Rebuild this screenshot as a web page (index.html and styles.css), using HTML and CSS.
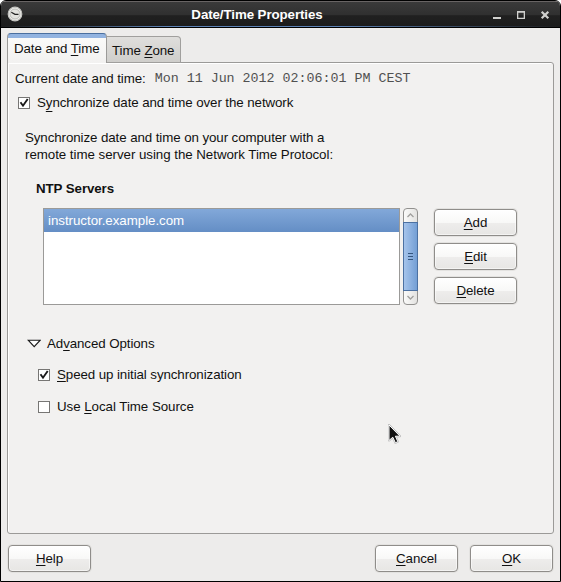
FILE: index.html
```html
<!DOCTYPE html>
<html lang="en">
<head>
<meta charset="utf-8">
<title>Date/Time Properties</title>
<link rel="stylesheet" href="styles.css">
</head>
<body>
<div class="window">
  <header class="titlebar">
    <svg class="clock" width="16" height="16" viewBox="0 0 16 16"><circle cx="8" cy="8" r="6.8" fill="#efefec" stroke="#c6c6c2" stroke-width="1.2"/><circle cx="8" cy="8" r="5" fill="#e2e2de" stroke="#a9a9a5" stroke-width=".7"/><path d="M4.3 6.2 8 8.3H11.5" fill="none" stroke="#222" stroke-width="1.2"/></svg>
    <h1 class="title">Date/Time Properties</h1>
    <svg class="controls" width="58" height="12" viewBox="0 0 58 12"><path d="M0 10h8" stroke="#d0d0ce" stroke-width="2"/><path d="M24 3h8v8h-8ZM25.3 4.8v4.9h5.4V4.8Z" fill="#d0d0ce" fill-rule="evenodd"/><path d="M48.7 3.7 55.3 10.3M55.3 3.7 48.7 10.3" stroke="#d0d0ce" stroke-width="2.2"/></svg>
  </header>
  <main class="content">
    <nav class="tabs">
      <div class="tab active"><span>Date and <u>T</u>ime</span></div>
      <div class="tab"><span>Time <u>Z</u>one</span></div>
    </nav>
    <section class="panel">
      <div class="current"><span>Current date and time:</span><span class="stamp">Mon 11 Jun 2012 02:06:01 PM CEST</span></div>
      <div class="check sync"><span class="box"><svg width="10" height="10" viewBox="0 0 10 10"><path d="M1.5 4.2 4 7.7 8.7 1" fill="none" stroke="#1a1a1a" stroke-width="1.9"/></svg></span><span>S<u class="low">y</u>nchronize date and time over the network</span></div>
      <p class="intro">Synchronize date and time on your computer with a<br><span class="wide">remote time server using the Network Time Protocol:</span></p>
      <h2 class="heading">NTP Servers</h2>
      <div class="servers">
        <div class="list"><div class="row">instructor.example.com</div></div>
        <div class="scroll">
          <svg class="arrow" width="13" height="13" viewBox="0 0 13 13"><path d="M3.5 8 6.5 5 9.5 8" fill="none" stroke="#a09f9d" stroke-width="1.3"/></svg>
          <div class="thumb"><i></i><i></i><i></i></div>
          <svg class="arrow" width="13" height="13" viewBox="0 0 13 13"><path d="M3.5 5 6.5 8 9.5 5" fill="none" stroke="#a09f9d" stroke-width="1.3"/></svg>
        </div>
        <div class="actions">
          <button class="btn"><span><u>A</u>dd</span></button>
          <button class="btn"><span><u>E</u>dit</span></button>
          <button class="btn"><span><u>D</u>elete</span></button>
        </div>
      </div>
      <div class="expander"><svg width="14" height="9" viewBox="0 0 14 9"><path d="M1.2 1.2h12L7.2 7.6Z" fill="#fff" stroke="#1a1a1a" stroke-width="1.1"/></svg><span>Ad<u>v</u>anced Options</span></div>
      <div class="check speed"><span class="box"><svg width="10" height="10" viewBox="0 0 10 10"><path d="M1.5 4.2 4 7.7 8.7 1" fill="none" stroke="#1a1a1a" stroke-width="1.9"/></svg></span><span><u>S</u>peed up initial synchronization</span></div>
      <div class="check local"><span class="box"></span><span class="wide">Use <u>L</u>ocal Time Source</span></div>
    </section>
    <footer class="footer">
      <button class="btn help"><span><u>H</u>elp</span></button>
      <button class="btn"><span><u>C</u>ancel</span></button>
      <button class="btn"><span><u>O</u>K</span></button>
    </footer>
  </main>
  <svg class="pointer" width="16" height="22" viewBox="0 0 16 22"><path d="M2 2V17.5L5.8 14.2 8.4 19.8 10.8 18.6 8.4 13.2H13Z" fill="#111" stroke="#b5b5b5" stroke-width="2" stroke-linejoin="round"/><path d="M2 2V17.5L5.8 14.2 8.4 19.8 10.8 18.6 8.4 13.2H13Z" fill="#111" stroke="#fff" stroke-linejoin="round"/></svg>
</div>
</body>
</html>
```
FILE: styles.css
```css
* { box-sizing: border-box; }
body {
  margin: 0;
  background: #fff;
  color: #111;
  font: 13.33px/17px "Liberation Sans", Arial, sans-serif;
  letter-spacing: -0.09px;
}
u {
  text-decoration-thickness: 1px;
  text-underline-offset: 2px;
  text-decoration-skip-ink: none;
}
.low { text-underline-offset: 4px; }
svg { display: block; flex: none; }
.window {
  position: relative;
  width: 561px;
  height: 582px;
  display: flex;
  flex-direction: column;
  border: 1px solid #000;
  border-radius: 6px 6px 0 0;
  background: #edeceb;
  overflow: hidden;
}
.titlebar {
  height: 27px;
  flex: none;
  display: flex;
  align-items: center;
  padding: 0 9px 1px 6px;
  border-top: 1px solid #686464;
  border-bottom: 1px solid #000;
  background: linear-gradient(90deg, transparent, #5d82b5 30%, #5d82b5 60%, transparent) bottom / 100% 1px no-repeat,
    linear-gradient(#3a3a3a, #303030 50%, #202020 55%, #1c1c1c);
}
.title {
  flex: 1;
  margin: 0 0 0 -2px;
  color: #fff;
  font-size: 13.33px;
  line-height: 17px;
  text-align: center;
}
.content {
  flex: 1;
  padding: 5px 6px 9px;
  display: flex;
  flex-direction: column;
}
.tabs {
  display: flex;
  align-items: flex-end;
  height: 30px;
  margin-bottom: -1px;
  z-index: 1;
}
.tab {
  height: 27px;
  width: 74px;
  padding: 5px 0 0 5px;
  border: 1px solid #a09f9d;
  border-left: 0;
  border-radius: 0 4px 0 0;
  background: linear-gradient(#dfdedc, #cfcecb);
  white-space: nowrap;
}
.tab.active {
  width: 100px;
  height: 30px;
  padding: 6px 0 0 6px;
  border: 1px solid #9b9a98;
  border-top: 1px solid #4a6f9f;
  border-bottom: 0;
  border-radius: 4px 4px 0 0;
  background: linear-gradient(#92b3e0 0 4px, #fafaf9 4px, #f2f1f0);
}
.panel {
  width: 547px;
  height: 472px;
  padding: 7px 0 0 7px;
  border: 1px solid #9b9a98;
  border-radius: 0 3px 3px 3px;
  background: #f2f1f0;
  box-shadow: inset 1px 1px #fff;
}
.current { display: flex; align-items: center; height: 17px; }
.stamp {
  margin-left: 9px;
  font-family: "Liberation Mono", "Courier New", monospace;
  letter-spacing: 0;
  color: #505050;
}
.check { display: flex; align-items: center; height: 17px; }
.box {
  width: 12px;
  height: 12px;
  margin-right: 7px;
  border: 1px solid #777674;
  background: #fff;
}
.wide { letter-spacing: -0.045px; }
.sync { margin: 7px 0 0 3px; }
.intro { margin: 18px 0 0 10px; }
.heading { margin: 17px 0 0 21px; font-size: 13.33px; line-height: 17px; }
.servers { display: flex; margin: 11px 0 0 28px; }
.list {
  width: 357px;
  height: 97px;
  border: 1px solid #9b9a98;
  background: #fff;
}
.row {
  height: 23px;
  padding: 3px 4px;
  background: linear-gradient(#82a8d9, #648ec5);
  color: #fff;
  letter-spacing: -0.04px;
}
.scroll {
  width: 15px;
  height: 97px;
  margin-left: 3px;
  border: 1px solid #92918f;
  border-radius: 4px;
  background: linear-gradient(90deg, #fbfbfa, #e3e2e0);
}
.thumb {
  height: 69px;
  margin: 0 -1px;
  border: 1px solid #4c71a2;
  background: linear-gradient(90deg, #a6c4eb, #749fd5);
  display: flex;
  flex-direction: column;
  align-items: center;
  justify-content: center;
  gap: 2px;
}
.thumb i { width: 5px; height: 1px; background: #35567f; }
.actions { display: flex; flex-direction: column; gap: 7px; margin: 1px 0 -1px 16px; }
.btn {
  width: 83px;
  height: 27px;
  padding: 0;
  border: 1px solid #8f8d8a;
  border-radius: 4px;
  background: linear-gradient(#fff, #f8f8f7 50%, #eeedec 51%, #e7e6e4);
  box-shadow: inset 0 0 0 1px #fff8, 0 0 0 1px #e3e2e0;
  color: #111;
  font: inherit;
  letter-spacing: inherit;
}
.expander { display: flex; align-items: center; gap: 6px; height: 17px; margin: 30px 0 0 12px; }
.speed { margin: 14px 0 0 23px; }
.local { margin: 15px 0 0 23px; }
.footer { display: flex; gap: 12px; padding: 11px 1px 0 1px; }
.help { margin-right: auto; }
.pointer { position: absolute; left: 386px; top: 422px; }
```
